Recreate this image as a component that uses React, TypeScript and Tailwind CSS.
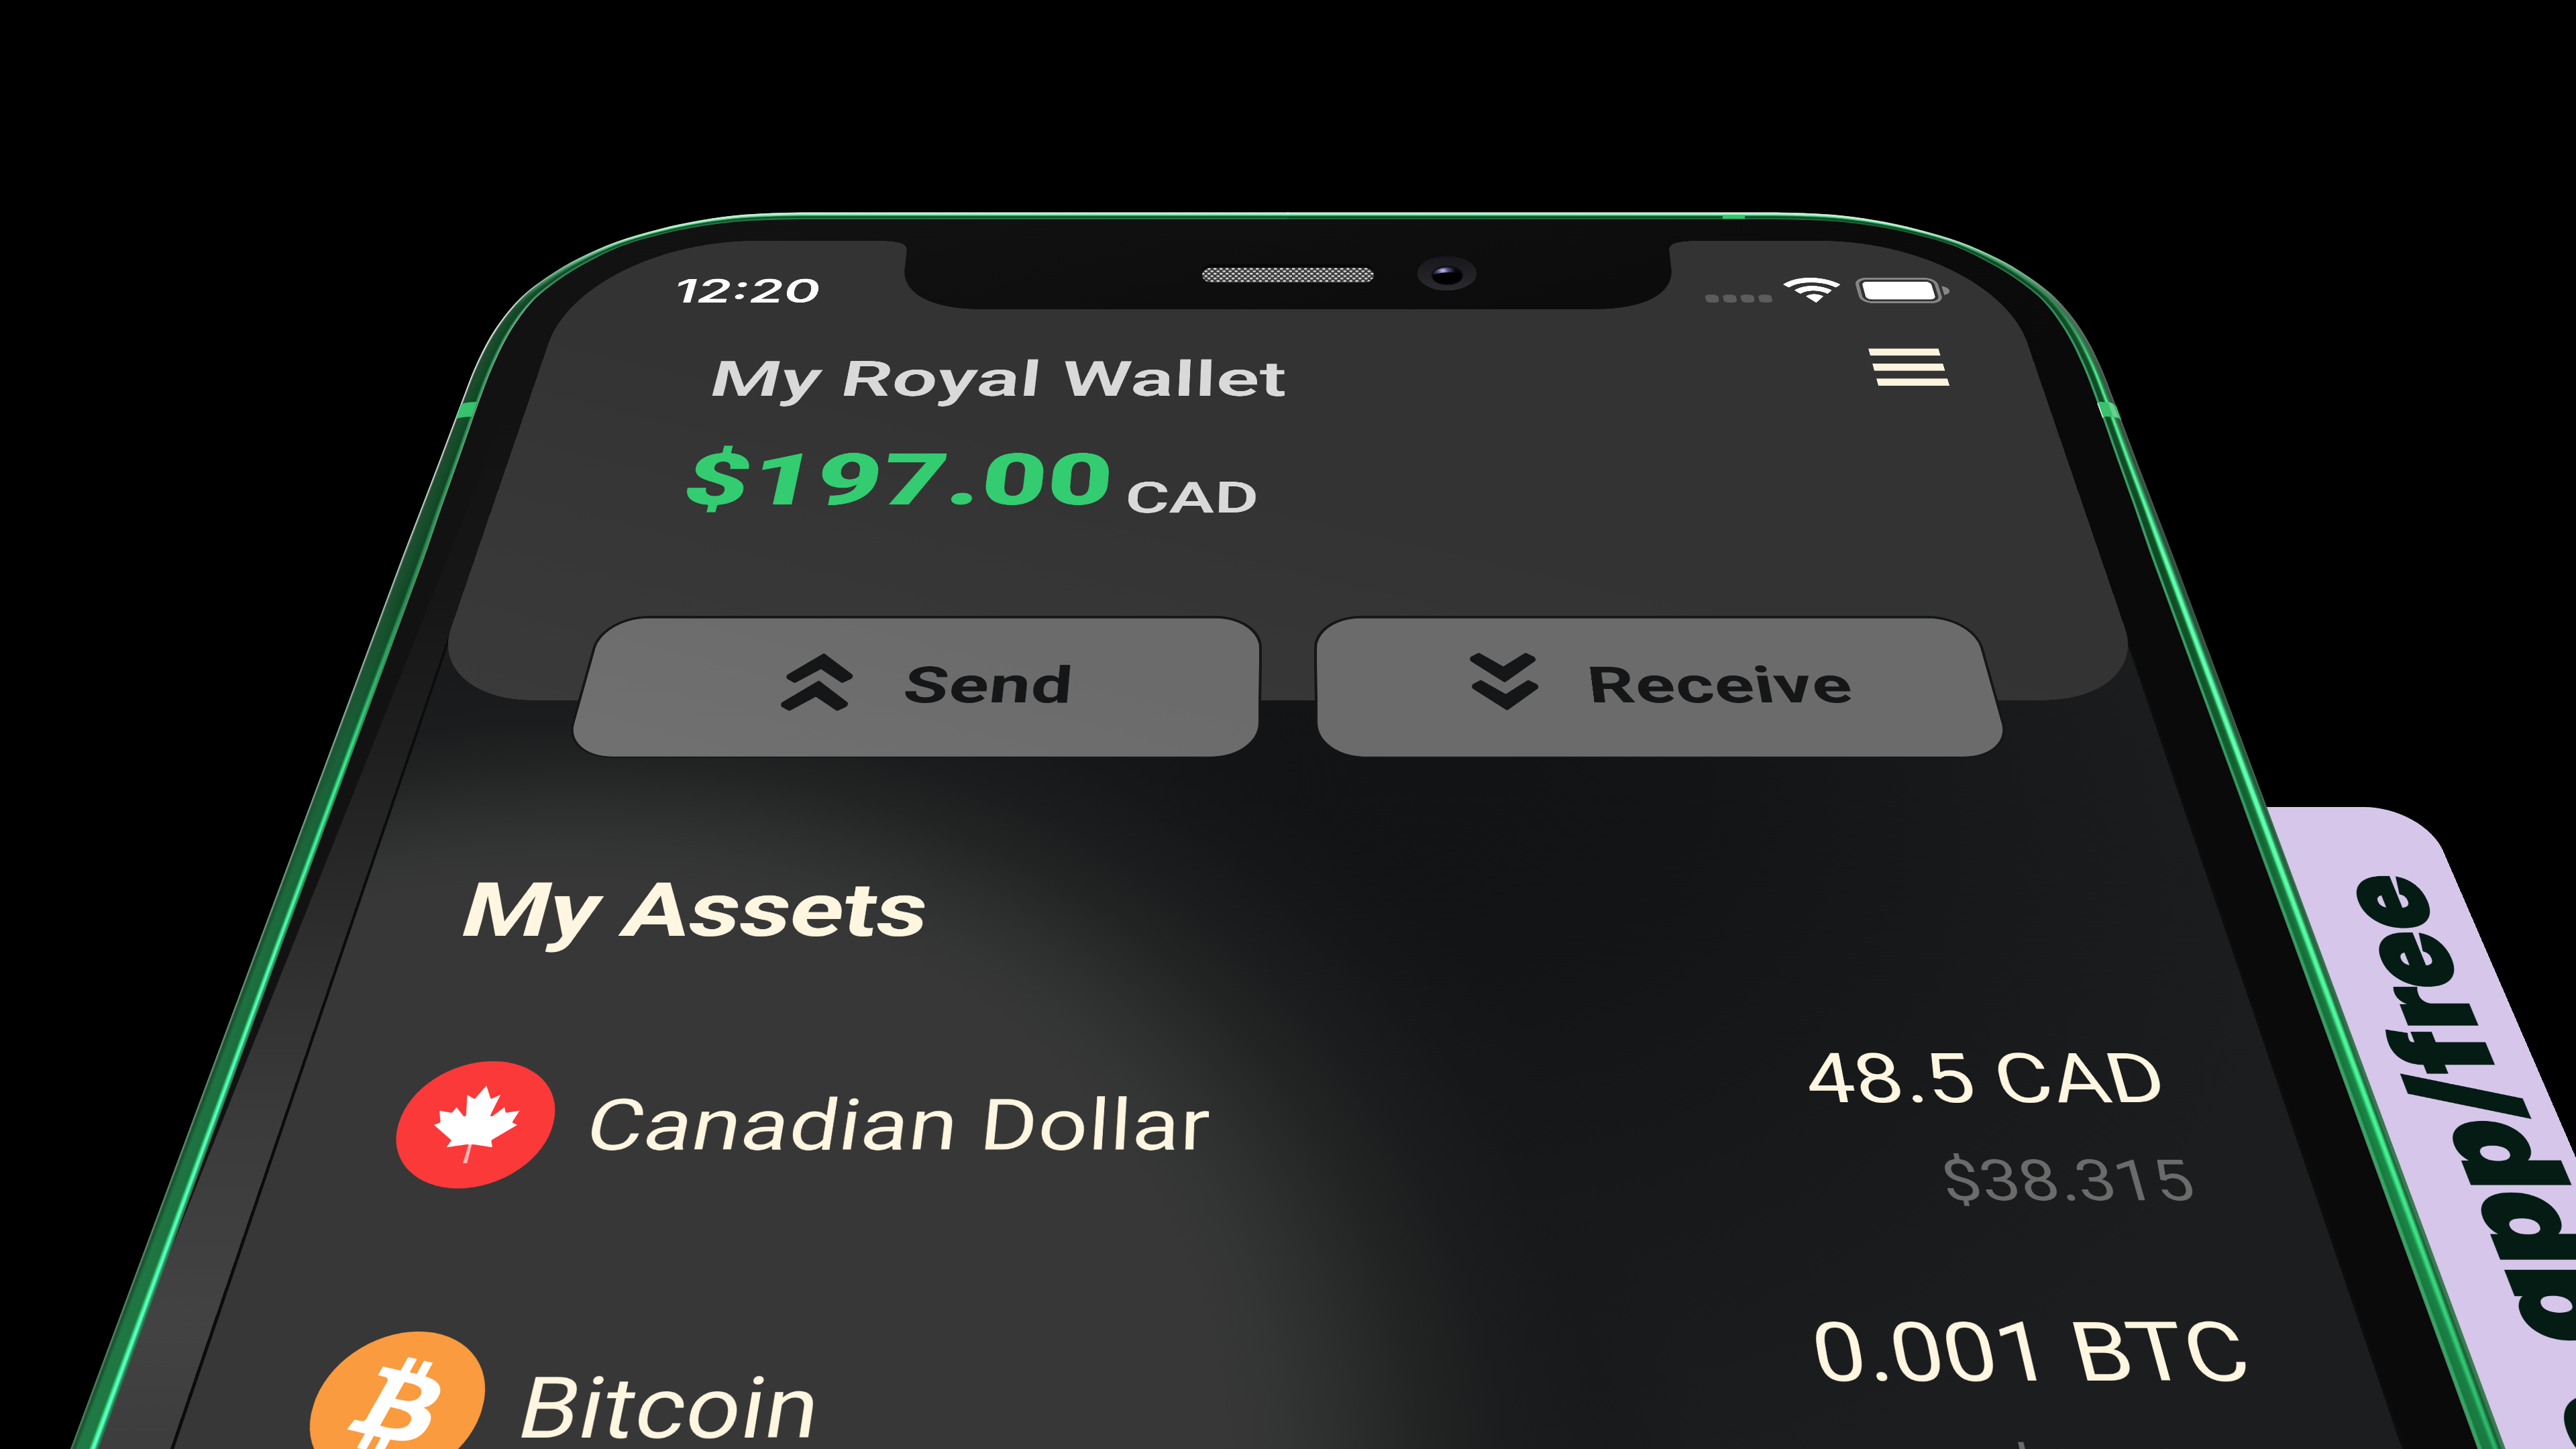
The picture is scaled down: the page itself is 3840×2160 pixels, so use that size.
import React from "react";
import { SiBitcoin } from "react-icons/si";

type RGB = [number, number, number];
type Pt = [number, number];
type Stops = [number, string][];
type Profile = { y: number; stops: Stops };

const hex = (h: string): RGB => [
  parseInt(h.slice(1, 3), 16),
  parseInt(h.slice(3, 5), 16),
  parseInt(h.slice(5, 7), 16),
];
const mix = (a: RGB, b: RGB, t: number): RGB => [
  a[0] + (b[0] - a[0]) * t,
  a[1] + (b[1] - a[1]) * t,
  a[2] + (b[2] - a[2]) * t,
];
const css = (c: RGB) => `rgb(${c.map((v) => Math.round(v)).join(",")})`;

/* Outer and inner edge of the metal frame, left half, bottom to top centre. */
const EDGE: [number, number, number, number][] = [
  [90.1, 2200, 131.8, 2200],
  [387.5, 1400, 423.2, 1400],
  [598, 835, 631, 835],
  [628, 757, 658, 757],
  [657.5, 680, 685.5, 680],
  [686.5, 603, 712.5, 603],
  [710.5, 542, 735, 545],
  [738.5, 490, 762, 492],
  [775, 445, 794, 449],
  [816.8, 412, 832, 417.8],
  [861.5, 385.4, 872, 393],
  [918.9, 360.4, 926, 367],
  [982.7, 341.4, 987, 349],
  [1046, 328, 1048, 336.8],
  [1110, 319.8, 1111, 329.5],
  [1193, 316.5, 1193, 327],
  [1276, 316.5, 1276, 327],
  [1921, 316.5, 1921, 327],
];

const at = (f: number): Pt[] =>
  EDGE.map(([ox, oy, ix, iy]) => [ox + (ix - ox) * f, oy + (iy - oy) * f]);

const far = (a: Pt, b: Pt) => Math.hypot(a[0] - b[0], a[1] - b[1]);
const n2 = (v: number) => v.toFixed(2);

/* One path command per pair of neighbouring points; smooth inside the corner. */
const segments = (pts: Pt[]): number[][] => {
  const n = pts.length;
  const out: number[][] = [];
  for (let i = 0; i < n - 1; i++) {
    const p1 = pts[i];
    const p2 = pts[i + 1];
    if (i < 2 || i >= n - 3) {
      out.push([p2[0], p2[1]]);
      continue;
    }
    const len = far(p1, p2);
    const p0 = pts[i - 1];
    const p3 = pts[i + 2];
    const k1 = len / (far(p0, p1) + len) / 3;
    const k2 = len / (far(p2, p3) + len) / 3;
    out.push([
      p1[0] + (p2[0] - p0[0]) * k1,
      p1[1] + (p2[1] - p0[1]) * k1,
      p2[0] - (p3[0] - p1[0]) * k2,
      p2[1] - (p3[1] - p1[1]) * k2,
      p2[0],
      p2[1],
    ]);
  }
  return out;
};

const forward = (pts: Pt[]) =>
  segments(pts)
    .map((s) => (s.length === 2 ? "L" : "C") + s.map(n2).join(" "))
    .join("");

const backward = (pts: Pt[]) =>
  segments(pts)
    .map((s, i) => {
      const [x, y] = pts[i];
      return s.length === 2
        ? `L${n2(x)} ${n2(y)}`
        : `C${[s[2], s[3], s[0], s[1], x, y].map(n2).join(" ")}`;
    })
    .reverse()
    .join("");

const band = (f0: number, f1: number) => {
  const a = at(f0);
  const b = at(f1);
  const end = b[b.length - 1];
  return `M${a[0][0]} ${a[0][1]}${forward(a)}L${end[0]} ${end[1]}${backward(b)}Z`;
};

const TOP_L: Stops = [
  [0, "#9bb5a5"], [0.1, "#ecfff3"], [0.28, "#a5ffc9"], [0.42, "#4fe08a"], [0.55, "#1d6a3a"], [0.75, "#124726"], [0.85, "#2c9258"], [1, "#1a5a38"],
];
const LEFT: Profile[] = [
  { y: 318, stops: TOP_L },
  { y: 350, stops: TOP_L },
  { y: 400, stops: [[0, "#8fb39c"], [0.2, "#5fbf85"], [0.45, "#2a7045"], [0.7, "#124726"], [0.84, "#1c7a45"], [0.92, "#35b070"], [1, "#1c4a30"]] },
  { y: 460, stops: [[0, "#e6f5ea"], [0.1, "#bcd6c4"], [0.16, "#28503a"], [0.5, "#134a28"], [0.78, "#0f4726"], [0.86, "#2b9355"], [0.95, "#6aa583"], [1, "#b8b8b8"]] },
  { y: 560, stops: [[0, "#f2faf4"], [0.07, "#b8cfc0"], [0.12, "#27452f"], [0.4, "#164d2b"], [0.78, "#0f4726"], [0.86, "#2b9355"], [0.94, "#3b9b60"], [1, "#a8a8a8"]] },
  { y: 900, stops: [[0, "#c5d5ca"], [0.05, "#8fae9a"], [0.1, "#205034"], [0.4, "#174f2c"], [0.75, "#104827"], [0.84, "#25834c"], [0.94, "#2f9a58"], [1, "#6f6f6f"]] },
  { y: 1150, stops: [[0, "#90ab9a"], [0.05, "#6d9a7e"], [0.1, "#1c5533"], [0.45, "#1a6338"], [0.7, "#15603a"], [0.8, "#2fd87a"], [0.87, "#40ffa0"], [0.93, "#2a9a58"], [1, "#4f6a58"]] },
  { y: 1450, stops: [[0, "#6f967c"], [0.05, "#5a8a6c"], [0.1, "#1a4a2c"], [0.3, "#1d7240"], [0.68, "#1a6b3c"], [0.78, "#38f58a"], [0.85, "#6bffda"], [0.9, "#35b070"], [1, "#2f6a48"]] },
  { y: 2200, stops: [[0, "#4f7f60"], [0.05, "#3f7452"], [0.1, "#194d2d"], [0.25, "#1f7a45"], [0.65, "#1f7a45"], [0.75, "#38f58a"], [0.82, "#70fff0"], [0.88, "#3fe090"], [0.93, "#238a50"], [1, "#2a6a45"]] },
];
const TOP_R: Stops = [
  [0, "#9bb5a5"], [0.12, "#f4fff8"], [0.3, "#9dffc4"], [0.42, "#44e084"], [0.55, "#1d6a3a"], [0.75, "#0f4124"], [0.88, "#20804a"], [1, "#174a2c"],
];
const RIGHT: Profile[] = [
  { y: 318, stops: TOP_R },
  { y: 345, stops: TOP_R },
  { y: 390, stops: [[0, "#a8c5b2"], [0.2, "#63c88c"], [0.45, "#2f8a54"], [0.65, "#124726"], [0.85, "#145029"], [0.92, "#2f9a5a"], [1, "#1f5a38"]] },
  { y: 460, stops: [[0, "#6a7a70"], [0.2, "#4a7058"], [0.45, "#2f8a54"], [0.6, "#135029"], [0.82, "#114a27"], [0.9, "#35a863"], [1, "#3a6a4c"]] },
  { y: 560, stops: [[0, "#5f6a62"], [0.15, "#34533f"], [0.32, "#2a7a4a"], [0.45, "#5aff9a"], [0.55, "#1f8a4a"], [0.62, "#114a27"], [0.84, "#114a27"], [0.9, "#35a863"], [0.96, "#3aa868"], [1, "#4a5a50"]] },
  { y: 850, stops: [[0, "#3c5545"], [0.18, "#2a4a38"], [0.28, "#34a868"], [0.38, "#70ffc4"], [0.48, "#50ff98"], [0.58, "#17602f"], [0.66, "#0f4a26"], [0.86, "#0f4a26"], [0.91, "#35a863"], [0.96, "#35a863"], [1, "#5a5a5a"]] },
  { y: 1200, stops: [[0, "#3a7a52"], [0.12, "#265038"], [0.24, "#2a8a50"], [0.33, "#66ffba"], [0.46, "#5affa8"], [0.56, "#1a7a40"], [0.7, "#136030"], [0.86, "#156a38"], [0.92, "#30b068"], [0.97, "#2a8a50"], [1, "#6a6a6a"]] },
  { y: 1700, stops: [[0, "#3a7a52"], [0.12, "#3a7a52"], [0.2, "#1a5a35"], [0.3, "#3fe088"], [0.38, "#48ff94"], [0.46, "#30d078"], [0.54, "#1c8a48"], [0.82, "#187840"], [0.88, "#2fa860"], [0.95, "#35a863"], [1, "#6a6a6a"]] },
  { y: 2200, stops: [[0, "#3f8056"], [0.12, "#357a4e"], [0.2, "#16502f"], [0.28, "#1c8a4c"], [0.36, "#2cb868"], [0.42, "#22a058"], [0.5, "#1a7a42"], [0.82, "#187840"], [0.88, "#2fa860"], [0.95, "#35a863"], [1, "#5f5f5f"]] },
];

const sample = (stops: Stops, f: number): RGB => {
  for (let i = 0; i < stops.length - 1; i++) {
    const [a, ca] = stops[i];
    const [b, cb] = stops[i + 1];
    if (f <= b) return mix(hex(ca), hex(cb), (f - a) / (b - a));
  }
  return hex(stops[stops.length - 1][1]);
};

const BANDS = 30;

function FrameSide({ id, profiles }: { id: string; profiles: Profile[] }) {
  const list = Array.from({ length: BANDS }, (_, i) => i);
  return (
    <g>
      <defs>
        {list.map((i) => (
          <linearGradient key={i} id={`${id}${i}`} gradientUnits="userSpaceOnUse" x1="0" y1="318" x2="0" y2="2200">
            {profiles.map((p) => (
              <stop
                key={p.y}
                offset={(p.y - 318) / (2200 - 318)}
                stopColor={css(sample(p.stops, (i + 0.5) / BANDS))}
              />
            ))}
          </linearGradient>
        ))}
      </defs>
      {list.map((i) => (
        <path key={i} d={band(i / BANDS, Math.min(1, (i + 2) / BANDS))} fill={`url(#${id}${i})`} />
      ))}
    </g>
  );
}

function PhoneBody() {
  const face = forward(at(1));
  return (
    <svg className="absolute inset-0" width="3840" height="2160" viewBox="0 0 3840 2160">
      <defs>
        <linearGradient id="bezel" gradientUnits="userSpaceOnUse" x1="900" y1="330" x2="3000" y2="900">
          <stop offset="0" stopColor="#121212" />
          <stop offset="0.5" stopColor="#0f0f0f" />
          <stop offset="1" stopColor="#0a0a0a" />
        </linearGradient>
        <linearGradient id="bezelRight" gradientUnits="userSpaceOnUse" x1="1920" y1="330" x2="1000" y2="900">
          <stop offset="0" stopColor="#0f0f0f" />
          <stop offset="1" stopColor="#0a0a0a" />
        </linearGradient>
        <linearGradient id="glare" gradientUnits="userSpaceOnUse" x1="0" y1="600" x2="0" y2="2160">
          <stop offset="0" stopColor="#fff" stopOpacity="0" />
          <stop offset="0.2" stopColor="#fff" stopOpacity="0.02" />
          <stop offset="0.35" stopColor="#fff" stopOpacity="0.06" />
          <stop offset="0.52" stopColor="#fff" stopOpacity="0.12" />
          <stop offset="0.7" stopColor="#fff" stopOpacity="0.175" />
          <stop offset="0.88" stopColor="#fff" stopOpacity="0.205" />
          <stop offset="1" stopColor="#fff" stopOpacity="0.18" />
        </linearGradient>
      </defs>
      <path d={`M131.8 2200${face}V2200Z`} fill="url(#bezel)" />
      <path d={`M131.8 2200${face}V2200Z`} fill="url(#bezelRight)" transform="translate(3840 0) scale(-1 1)" />
      <path d="M760 600L1000 600L1000 2200L120 2200Z" fill="url(#glare)" />
      <FrameSide id="fl" profiles={LEFT} />
      <g transform="translate(3840 0) scale(-1 1)">
        <FrameSide id="fr" profiles={RIGHT} />
      </g>
      <path d="M687.500 603Q692 599.500 711 599L703.500 621Q685 621.500 679.500 625Z" fill="#37c26e" />
      <path d="M3127 599Q3149 598 3155 606L3162.500 626.500Q3157 620.500 3135 621Z" fill="#37c26e" />
      <path d="M3142 599L3149 601L3158 622L3150 621Z" fill="#6fce92" />
      <path d="M3127 601L3135 623" stroke="#e8f5ec" strokeWidth="1.6" />
      <rect x="2568" y="320.500" width="33" height="5.500" fill="#35c46e" />
    </svg>
  );
}

function Sensors() {
  return (
    <svg className="absolute left-[1780px] top-[375px]" width="440" height="64" viewBox="1780 375 440 64">
      <defs>
        <pattern id="mesh" width="9" height="7.200" patternUnits="userSpaceOnUse" x="1791" y="399">
          <rect width="9" height="7.200" fill="#3b3b3b" />
          <ellipse cx="2.250" cy="1.800" rx="2.500" ry="1.400" fill="#e0e0e0" />
          <ellipse cx="6.750" cy="5.400" rx="2.500" ry="1.400" fill="#e0e0e0" />
        </pattern>
        <linearGradient id="lens" x1="0" y1="0" x2="0" y2="1">
          <stop offset="0" stopColor="#16161c" />
          <stop offset="1" stopColor="#2a2a2f" />
        </linearGradient>
        <radialGradient id="shine" cx="0.35" cy="0.2" r="0.42">
          <stop offset="0" stopColor="#c8c8f8" />
          <stop offset="0.45" stopColor="#4c4c7c" />
          <stop offset="1" stopColor="#05050a" />
        </radialGradient>
      </defs>
      <rect x="1793" y="394" width="254" height="22" rx="11" fill="#060606" />
      <rect x="1792" y="399" width="256" height="22" rx="14" ry="11" fill="url(#mesh)" />
      <ellipse cx="2157" cy="407.300" rx="44.500" ry="25.800" fill="url(#lens)" />
      <ellipse cx="2157.500" cy="410.500" rx="24" ry="14.500" fill="#101014" />
      <ellipse cx="2157.500" cy="411" rx="22" ry="12.500" fill="url(#shine)" />
      <path d="M2136 410Q2157 403 2179 408Q2180 423.500 2157.500 423.500Q2135 423.500 2136 410Z" fill="#000" />
    </svg>
  );
}

const Notch = () => (
  <svg className="absolute left-0 top-[-4px]" width="3750" height="320" viewBox="0 -4 3750 320">
    <defs>
      <linearGradient id="notchFill" x1="0" y1="0" x2="1" y2="0.3">
        <stop offset="0" stopColor="#111111" />
        <stop offset="1" stopColor="#0c0c0c" />
      </linearGradient>
    </defs>
    <path
      d="M770 -4L788 0C842 2 865 14 865 48L868 118C868 238 953 311 1085 311L2665 311C2797 311 2882 238 2882 118L2885 48C2885 14 2908 2 2962 0L2980 -4Z"
      fill="url(#notchFill)"
    />
  </svg>
);

const StatusBar = () => (
  <div className="flex h-[460px] items-start">
    <span className="ml-[280px] mt-[157px] w-[444px] font-['Inter'] text-[144px] font-semibold leading-none text-white">
      12:20
    </span>
    <div className="ml-[2232px] mt-[247px] flex gap-[12px]">
      <i className="h-[34px] w-[34px] rounded-[10px] bg-[#5c5c5c]" />
      <i className="h-[34px] w-[34px] rounded-[10px] bg-[#5c5c5c]" />
      <i className="h-[34px] w-[34px] rounded-[10px] bg-[#5c5c5c]" />
      <i className="h-[34px] w-[34px] rounded-[10px] bg-[#5c5c5c]" />
    </div>
    <svg className="ml-[38px] mt-[170px]" width="148" height="112" viewBox="0 0 148 112" fill="#fff">
      <path d="M74 0C102 0 128 11 147 29Q149 31 147 33L137 43Q135 45 133 43C117 28 96 22 74 22C52 22 31 28 15 43Q13 45 11 43L1 33Q-1 31 1 29C20 11 46 0 74 0Z" />
      <path d="M74 37C92 37 108 44 121 55Q123 57 121 59L111 71Q109 73 107 71C98 63 86 59 74 59C62 59 50 63 41 71Q39 73 37 71L27 59Q25 57 27 55C40 44 56 37 74 37Z" />
      <path d="M74 74C82 74 89 77 95 82Q97 84 95 86L76 110Q74 112 72 110L53 86Q51 84 53 82C59 77 66 74 74 74Z" />
    </svg>
    <svg className="ml-[40px] mt-[170px]" width="242" height="116" viewBox="0 0 242 116">
      <rect x="5" y="5" width="206" height="105" rx="27" fill="none" stroke="#868686" strokeWidth="9" />
      <rect x="18" y="18" width="180" height="80" rx="15" fill="#fff" />
      <path d="M223 38C235 42 240 50 240 58C240 66 235 74 223 78Z" fill="#868686" />
    </svg>
  </div>
);

function WalletHeader() {
  return (
    <header className="relative h-[1765px] w-full rounded-b-[230px] bg-[#333333] bg-[linear-gradient(20deg,rgba(255,255,255,0.035),rgba(255,255,255,0)_45%)]">
      <StatusBar />
      <div className="flex justify-between pl-[436px] pr-[230px]">
        <h1 className="mt-[49px] text-[200px] font-semibold leading-none tracking-[0.5px] text-[#d9d9d9]">
          My Royal Wallet
        </h1>
        <div className="mt-[21px] flex w-[177px] flex-col gap-[33px]">
          <i className="h-[30px] bg-[#fdf4e0]" />
          <i className="h-[30px] bg-[#fdf4e0]" />
          <i className="h-[30px] bg-[#fdf4e0]" />
        </div>
      </div>
      <p className="mt-[162px] flex items-start pl-[437px]">
        <span className="w-[1053px] text-[270px] font-black leading-none text-[#33cc70]">$197.00</span>
        <span className="mt-[123px] text-[160px] font-semibold leading-none text-[#d9d9d9]">CAD</span>
      </p>
    </header>
  );
}

const Chevrons = ({ down = false }: { down?: boolean }) => (
  <svg
    className={down ? "rotate-180" : ""}
    width="148"
    height="184"
    viewBox="0 0 148 184"
    fill="#141617"
    stroke="#141617"
    strokeWidth="8"
    strokeLinejoin="round"
  >
    <path d="M74 6L142 72Q144 77 141 81L126 92L74 47L22 92L7 81Q4 77 6 72Z" />
    <path d="M74 94L142 160Q144 165 141 169L126 180L74 135L22 180L7 169Q4 165 6 160Z" />
  </svg>
);

function Actions() {
  const base =
    "flex h-[439px] w-[1475px] items-start rounded-[100px] bg-[#6b6b6b] text-[160px] font-bold leading-none tracking-[1.5px] text-[#141617] shadow-[0_-2px_0_6px_#141617]";
  return (
    <div className="relative -mt-[266px] ml-[336px] flex gap-[128px]">
      <button className={`${base} bg-[linear-gradient(20deg,rgba(255,255,255,0.04),rgba(255,255,255,0)_70%)] pl-[436px] pt-[115px]`}>
        <Chevrons />
        <span className="ml-[114px] mt-[24px]">Send</span>
      </button>
      <button className={`${base} pl-[337px] pt-[115px]`}>
        <Chevrons down />
        <span className="ml-[107px] mt-[24px]">Receive</span>
      </button>
    </div>
  );
}

const MapleLeaf = () => (
  <span className="flex h-[293px] w-[288px] items-center justify-center rounded-full bg-[#fb3939]">
    <svg width="168" height="180" viewBox="-2016 -2030 4032 4060" preserveAspectRatio="none">
      <path d="M-70 1000L-90 2030H90L70 1000Z" fill="#ffb4b4" />
      <path
        d="M0 1075L-156 1069l-859 151 116-320a65 65 0 0 0-20-73l-941-762 212-99a65 65 0 0 0 34-79l-186-572 542 115a65 65 0 0 0 73-38l105-247 423 454a65 65 0 0 0 111-57l-204-1052 327 189a65 65 0 0 0 91-27l332-652 332 652a65 65 0 0 0 91 27l327-189-204 1052a65 65 0 0 0 111 57l423-454 105 247a65 65 0 0 0 73 38l542-115-186 572a65 65 0 0 0 34 79l212 99-941 762a65 65 0 0 0-20 73l116 320-859-151Z"
        fill="#fff"
      />
    </svg>
  </span>
);

const BitcoinMark = () => (
  <span className="flex h-[293px] w-[288px] items-center justify-center overflow-hidden rounded-full bg-[#f99b3e]">
    <span className="flex h-[282px] w-[282px] shrink-0 items-center justify-center rounded-full bg-white">
      <SiBitcoin size={293} color="#f99b3e" className="shrink-0" />
    </span>
  </span>
);

function AssetRow(props: { icon: React.ReactNode; name: string; amount: string; value: string }) {
  return (
    <li className="flex h-[594px] items-start justify-between pl-[218px] pr-[218px]">
      <div className="flex items-start pt-[40px]">
        {props.icon}
        <span className="ml-[65px] mt-[69px] text-[163px] leading-none tracking-[0.8px]">{props.name}</span>
      </div>
      <div className="flex flex-col items-end">
        <span className="text-[163px] leading-none">{props.amount}</span>
        <span className="mt-[90px] pr-[4px] text-[126px] leading-none text-[#6b6b6b]">{props.value}</span>
      </div>
    </li>
  );
}

/* The tilted surface that the phone screen and the banner lie on. */
const PLANE =
  "absolute left-0 top-0 origin-top-left [transform:matrix3d(0.56006,0,0,0,-0.198355,0.280125,0,-0.00010331,0,0,1,0,869.89,359,0,1)]";

export default function App() {
  return (
    <main className="relative h-[2160px] w-[3840px] overflow-hidden bg-black font-['Roboto',sans-serif]">
      <div className={`${PLANE} h-[3700px] w-[4600px]`}>
        <aside className="ml-[3650px] mt-[2087px] flex h-[1700px] w-[597px] justify-end rounded-tr-[125px] bg-[#d5c6ea] pr-[49px] pt-[187px]">
          <div className="h-fit origin-top scale-y-[1.03]">
            <span className="block h-fit rotate-180 whitespace-nowrap font-['Inter'] text-[236px] font-black leading-none tracking-[4px] text-[#051c15] [-webkit-text-stroke:7px_#051c15] [font-feature-settings:'cv11'] [writing-mode:vertical-rl]">
              o.app/free
            </span>
          </div>
        </aside>
      </div>

      <PhoneBody />

      <div className={`${PLANE} h-[3700px] w-[3750px]`}>
        <section className="relative h-[3700px] w-[3750px] overflow-hidden rounded-t-[460px] bg-[#17191b] bg-[radial-gradient(circle_at_390px_3680px,#373737_0,#373737_1380px,#333434_1480px,#2b2c2c_1600px,#222424_1720px,#1a1c1d_1860px,rgba(22,24,26,0.6)_2020px,rgba(20,22,24,0)_2200px),radial-gradient(circle_at_2200px_2000px,#121315_0,#131416_500px,#1b1d1f_1700px)] text-[#fef6e0] shadow-[inset_6px_0_0_#0b0c0d,inset_-6px_0_0_#0b0c0d]">
          <WalletHeader />
          <Notch />
          <Actions />
          <h2 className="mt-[336px] pl-[220px] text-[200px] font-bold leading-none tracking-[-1.5px]">My Assets</h2>
          <ul className="mt-[243px]">
            <AssetRow icon={<MapleLeaf />} name="Canadian Dollar" amount="48.5 CAD" value="$38.315" />
            <AssetRow icon={<BitcoinMark />} name="Bitcoin" amount="0.001 BTC" value="$38.315" />
          </ul>
        </section>
      </div>

      <Sensors />
    </main>
  );
}
